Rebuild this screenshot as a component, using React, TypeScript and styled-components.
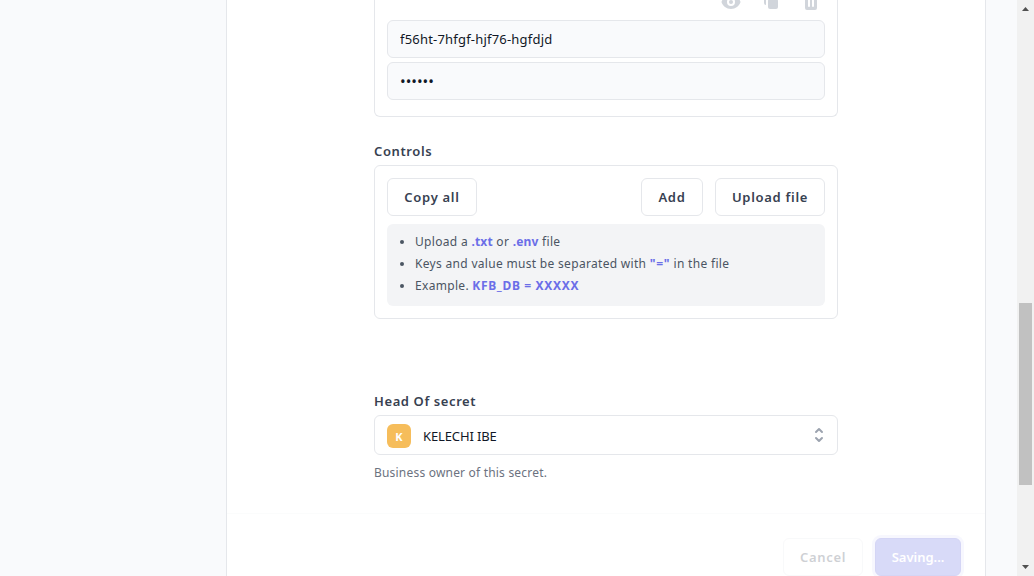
import React from "react";
import styled, { createGlobalStyle } from "styled-components";
import { HiEye, HiDuplicate, HiTrash, HiSelector } from "react-icons/hi";

const Global = createGlobalStyle`
  *, *::before, *::after { box-sizing: border-box; }
  html, body { margin: 0; height: 576px; overflow: hidden; }
  body { background: #f9fafc; font-family: "Noto Sans", "Open Sans", sans-serif; font-size: 14px; line-height: 20px; color: #111827; }
  button, input { font: inherit; }
`;

const Page = styled.div`
  display: flex;
  height: 576px;
  overflow: hidden;
`;

const SideSpace = styled.div<{ $width: number }>`
  flex: 0 0 ${(p) => p.$width}px;
`;

const Panel = styled.main`
  flex: 0 0 760px;
  display: flex;
  flex-direction: column;
  background: #fff;
  border: solid #e5e7eb;
  border-width: 0 1px;
`;

const Column = styled.div`
  width: 464px;
  height: 513px;
  margin: 0 auto;
`;

const Card = styled.section<{ $cut?: boolean }>`
  border: 1px solid #e5e7eb;
  border-radius: 6px;
  padding: 12px;
  ${(p) => p.$cut && "border-top: 0; border-radius: 0 0 6px 6px; padding: 0 12px 16px;"}
`;

const IconRow = styled.div`
  display: flex;
  justify-content: flex-end;
  gap: 20px;
  margin-top: -8px;
  padding: 0 4px 8px 0;
  color: #d1d5db;
  svg { display: block; }
`;

const Field = styled.input<{ $masked?: boolean }>`
  display: block;
  width: 100%;
  height: 38px;
  padding: 0 12px;
  border: 1px solid #e5e7eb;
  border-radius: 6px;
  background: #f9fafc;
  color: #111827;
  outline: 0;
  font-size: ${(p) => (p.$masked ? "15px" : "13px")};
  letter-spacing: ${(p) => (p.$masked ? "0" : "0.2px")};
  & + & { margin-top: 4px; }
`;

const Label = styled.h2<{ $top: number }>`
  margin: ${(p) => p.$top}px 0 4px;
  font-size: 13px;
  line-height: 20px;
  font-weight: 600;
  letter-spacing: 0.6px;
  color: #374151;
`;

const Row = styled.div`
  display: flex;
  gap: 12px;
`;

const Button = styled.button<{ $width: number; $primary?: boolean; $push?: boolean }>`
  width: ${(p) => p.$width}px;
  height: 38px;
  padding: 0;
  border: 1px solid ${(p) => (p.$primary ? "#5055d8" : "#e5e7eb")};
  border-radius: 6px;
  background: ${(p) => (p.$primary ? "#6068e4" : "#fff")};
  color: ${(p) => (p.$primary ? "#fff" : "#374151")};
  font-size: 13px;
  font-weight: 600;
  letter-spacing: ${(p) => (p.$primary ? "0" : "0.7px")};
  white-space: nowrap;
  ${(p) => p.$push && "margin-left: auto;"}
  ${(p) => p.$primary && "box-shadow: 0 0 0 3px #e0e2fc;"}
`;

const Hints = styled.ul`
  margin: 8px 0 0;
  padding: 7px 12px 9px 28px;
  border-radius: 6px;
  background: #f3f4f6;
  list-style: none;
  font-size: 12px;
  line-height: 22px;
  letter-spacing: 0.31px;
  color: #4b5563;
`;

const Hint = styled.li`
  display: flex;
  align-items: center;
  white-space: pre;
  &::before {
    content: "";
    width: 4px;
    height: 4px;
    margin: 0 11px 0 -15px;
    border-radius: 50%;
    background: #4b5563;
  }
`;

const Code = styled.b<{ $wide?: boolean }>`
  color: #6b6ee8;
  font-weight: 700;
  letter-spacing: ${(p) => (p.$wide ? "0.66px" : "0.2px")};
`;

const Select = styled.div`
  display: flex;
  align-items: center;
  height: 40px;
  padding: 0 8px 0 12px;
  border: 1px solid #e5e7eb;
  border-radius: 6px;
  svg { margin-left: auto; color: #9ca3af; }
`;

const Avatar = styled.span`
  width: 24px;
  height: 24px;
  margin: 2px 12px 0 0;
  border-radius: 6px;
  background: #f6bd5b;
  color: #fff;
  font-size: 11px;
  line-height: 25px;
  font-weight: 700;
  text-align: center;
`;

const Name = styled.span`
  padding-top: 2px;
  font-size: 13px;
  letter-spacing: -0.12px;
`;

const Helper = styled.p`
  margin: 8px 0 0;
  font-size: 12px;
  letter-spacing: 0.2px;
  color: #6b7280;
`;

const Footer = styled.footer`
  display: flex;
  justify-content: flex-end;
  gap: 12px;
  padding: 24px 24px 0;
  border-top: 1px solid #f0f1f3;
  opacity: 0.24;
`;

const Scrollbar = styled.div`
  flex: 0 0 17px;
  display: flex;
  flex-direction: column;
  align-items: center;
  justify-content: space-between;
  margin-left: auto;
  background: #f1f1f1;
  svg { display: block; fill: #505050; }
`;

const Thumb = styled.div`
  width: 13px;
  height: 182px;
  margin: 286px 0 74px;
  background: #c1c1c1;
`;

export default function App() {
  return (
    <Page>
      <Global />
      <SideSpace $width={226} />
      <Panel>
        <Column>
          <Card $cut>
            <IconRow>
              <HiEye size={20} />
              <HiDuplicate size={20} />
              <HiTrash size={20} />
            </IconRow>
            <Field readOnly value="f56ht-7hfgf-hjf76-hgfdjd" />
            <Field readOnly $masked type="password" value="secret" />
          </Card>
          <Label $top={24}>Controls</Label>
          <Card>
            <Row>
              <Button $width={90}>Copy all</Button>
              <Button $width={62} $push>Add</Button>
              <Button $width={110}>Upload file</Button>
            </Row>
            <Hints>
              <Hint>Upload a <Code>.txt</Code> or <Code>.env</Code> file</Hint>
              <Hint>Keys and value must be separated with <Code $wide>"="</Code> in the file</Hint>
              <Hint>Example. <Code $wide>KFB_DB = XXXXX</Code></Hint>
            </Hints>
          </Card>
          <Label $top={72}>Head Of secret</Label>
          <Select>
            <Avatar>K</Avatar>
            <Name>KELECHI IBE</Name>
            <HiSelector size={20} />
          </Select>
          <Helper>Business owner of this secret.</Helper>
        </Column>
        <Footer>
          <Button $width={80}>Cancel</Button>
          <Button $width={86} $primary>Saving...</Button>
        </Footer>
      </Panel>
      <Scrollbar>
        <svg width="17" height="17"><path d="M5 11h7L8.5 7z" /></svg>
        <Thumb />
        <svg width="17" height="17"><path d="M5 6h7L8.5 10z" /></svg>
      </Scrollbar>
    </Page>
  );
}
